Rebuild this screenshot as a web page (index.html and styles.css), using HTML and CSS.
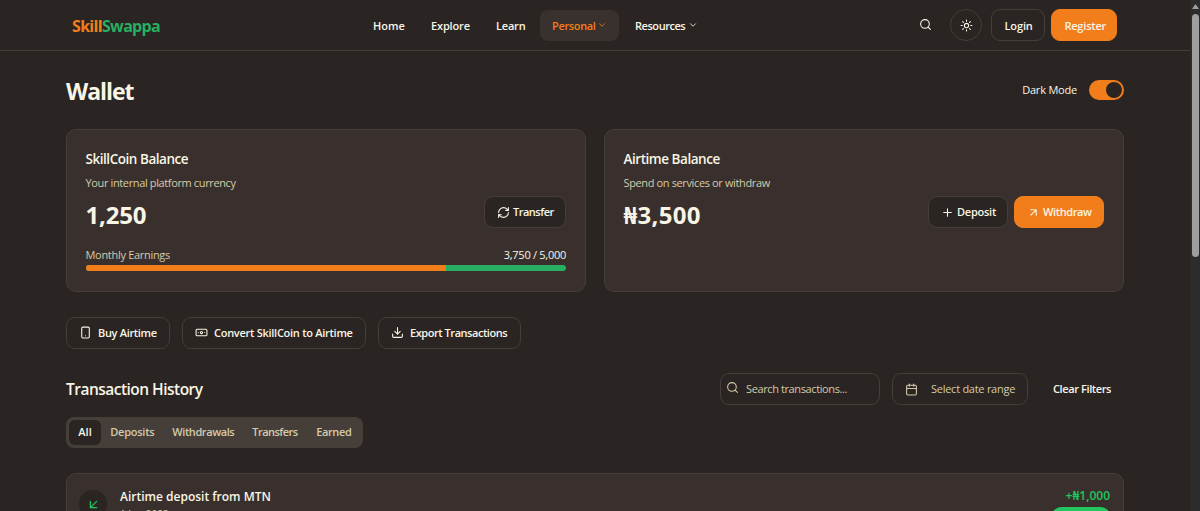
FILE: index.html
```html
<!DOCTYPE html>
<html lang="en">
<head>
<meta charset="utf-8">
<title>SkillSwappa Wallet</title>
<link rel="stylesheet" href="styles.css">
</head>
<body>
<div class="app">
<div class="page">
  <header class="header">
    <div class="logo"><span class="t"><span class="logo-a">Skill</span><span class="logo-b">Swappa</span></span></div>
    <nav class="nav">
      <a class="nav-item home"><span class="t">Home</span></a>
      <a class="nav-item explore"><span class="t">Explore</span></a>
      <a class="nav-item learn"><span class="t">Learn</span></a>
      <a class="nav-item personal active"><span class="t">Personal</span><svg class="chev" viewBox="0 0 24 24"><path d="m6 9 6 6 6-6"/></svg></a>
      <a class="nav-item resources"><span class="t">Resources</span><svg class="chev" viewBox="0 0 24 24"><path d="m6 9 6 6 6-6"/></svg></a>
    </nav>
    <div class="header-actions">
      <svg class="icon search" viewBox="0 0 24 24"><circle cx="11" cy="11" r="8"/><path d="m21 21-4.3-4.3"/></svg>
      <button class="btn theme"><svg class="icon" viewBox="0 0 24 24"><circle cx="12" cy="12" r="4"/><path d="M12 2v2M12 20v2M4.9 4.9l1.4 1.4M17.7 17.7l1.4 1.4M2 12h2M20 12h2M6.3 17.7l-1.4 1.4M19.1 4.9l-1.4 1.4"/></svg></button>
      <button class="btn login"><span class="t">Login</span></button>
      <button class="btn primary register"><span class="t">Register</span></button>
    </div>
  </header>
  <main class="main">
    <div class="title-row">
      <h1 class="title"><span class="t">Wallet</span></h1>
      <div class="mode"><span class="t">Dark Mode</span><span class="switch"><span class="knob"></span></span></div>
    </div>
    <section class="cards">
      <article class="card">
        <h2 class="card-title"><span class="t">SkillCoin Balance</span></h2>
        <p class="sub"><span class="t">Your internal platform currency</span></p>
        <div class="amount-row">
          <div class="amount"><span class="t">1,250</span></div>
          <button class="btn transfer"><svg class="icon" viewBox="0 0 24 24"><path d="M3 12a9 9 0 0 1 9-9 9.75 9.75 0 0 1 6.74 2.74L21 8"/><path d="M21 3v5h-5"/><path d="M21 12a9 9 0 0 1-9 9 9.75 9.75 0 0 1-6.74-2.74L3 16"/><path d="M8 16H3v5"/></svg><span class="t">Transfer</span></button>
        </div>
        <div class="earn"><span class="t earn-label">Monthly Earnings</span><span class="t earn-value">3,750 / 5,000</span></div>
        <div class="bar"><div class="bar-fill" style="width:75%"></div></div>
      </article>
      <article class="card">
        <h2 class="card-title"><span class="t">Airtime Balance</span></h2>
        <p class="sub"><span class="t">Spend on services or withdraw</span></p>
        <div class="amount-row">
          <div class="amount naira"><span class="t">₦3,500</span></div>
          <div class="pair">
            <button class="btn deposit"><svg class="icon" viewBox="0 0 24 24"><path d="M5 12h14M12 5v14"/></svg><span class="t">Deposit</span></button>
            <button class="btn primary withdraw"><svg class="icon" viewBox="0 0 24 24"><path d="M7 7h10v10M7 17 17 7"/></svg><span class="t">Withdraw</span></button>
          </div>
        </div>
      </article>
    </section>
    <section class="quick">
      <button class="btn buy"><svg class="icon" viewBox="0 0 24 24"><rect x="5" y="2" width="14" height="20" rx="2"/><path d="M12 18h.01"/></svg><span class="t">Buy Airtime</span></button>
      <button class="btn convert"><svg class="icon" viewBox="0 0 24 24"><rect x="2" y="6" width="20" height="12" rx="2"/><circle cx="12" cy="12" r="2"/><path d="M6 12h.01M18 12h.01"/></svg><span class="t">Convert SkillCoin to Airtime</span></button>
      <button class="btn export"><svg class="icon" viewBox="0 0 24 24"><path d="M21 15v4a2 2 0 0 1-2 2H5a2 2 0 0 1-2-2v-4M7 10l5 5 5-5M12 15V3"/></svg><span class="t">Export Transactions</span></button>
    </section>
    <section class="history-head">
      <h2 class="history-title"><span class="t">Transaction History</span></h2>
      <div class="filters">
        <div class="field search-field"><svg class="icon" viewBox="0 0 24 24"><circle cx="11" cy="11" r="8"/><path d="m21 21-4.3-4.3"/></svg><span class="t">Search transactions...</span></div>
        <div class="field date-field"><svg class="icon" viewBox="0 0 24 24"><path d="M8 2v4M16 2v4M3 10h18"/><rect x="3" y="4" width="18" height="18" rx="2"/></svg><span class="t">Select date range</span></div>
        <div class="clear"><span class="t">Clear Filters</span></div>
      </div>
    </section>
    <div class="tabs">
      <span class="tab all selected"><span class="t">All</span></span>
      <span class="tab deposits"><span class="t">Deposits</span></span>
      <span class="tab withdrawals"><span class="t">Withdrawals</span></span>
      <span class="tab transfers"><span class="t">Transfers</span></span>
      <span class="tab earned"><span class="t">Earned</span></span>
    </div>
    <section class="tx">
      <span class="tx-icon"><svg class="icon" viewBox="0 0 24 24"><path d="M17 7 7 17M17 17H7V7"/></svg></span>
      <div class="tx-info"><div class="tx-name"><span class="t">Airtime deposit from MTN</span></div><div class="tx-date"><span class="t">1 Jun 2023</span></div></div>
      <div class="tx-side"><div class="tx-amount"><span class="t">+₦1,000</span></div><div class="badge"></div></div>
    </section>
  </main>
</div>
<div class="scroll"><div class="scroll-arrow"></div><div class="thumb"></div></div>
</div>
</body>
</html>
```
FILE: styles.css
```css
* { box-sizing: border-box; }
body { margin: 0; height: 511px; overflow: hidden; background: #2a2422; color: #f8f5e6; font-family: "Open Sans", "Noto Sans", sans-serif; font-size: 11px; line-height: 16px; }
h1, h2, p { margin: 0; }
.app { display: flex; height: 511px; overflow: hidden; }
.page { width: 1190px; flex: none; }
.t { display: inline-block; white-space: nowrap; }
svg { fill: none; stroke: currentColor; stroke-width: 2; stroke-linecap: round; stroke-linejoin: round; flex: none; }
.icon { width: 13px; height: 13px; }

.header { display: flex; align-items: center; height: 51px; padding: 0 72.6px 0 72px; border-bottom: 1px solid #433d39; }
.logo { width: 289px; font-size: 16px; font-weight: 700; line-height: 24px; padding-top: 2px; letter-spacing: -0.68px; }
.logo-a { color: #f27e1b; }
.logo-b { color: #27ae60; }
.nav { display: flex; gap: 3px; font-weight: 600; }
.nav-item { display: flex; align-items: center; height: 31px; padding: 1px 0 0 12px; border-radius: 8px; }
.home { width: 55px; }
.explore { width: 62px; letter-spacing: -0.15px; }
.learn { width: 53px; letter-spacing: -0.2px; }
.personal { width: 79px; letter-spacing: -0.35px; }
.resources { width: 85px; margin-left: 1px; letter-spacing: -0.45px; }
.active { background: #38312e; color: #f27e1b; }
.chev { width: 10px; height: 10px; margin: -1px 12px 0 auto; }
.resources .chev { margin-right: 10px; }
.header-actions { display: flex; align-items: center; margin-left: auto; }
.btn { display: flex; align-items: center; height: 32px; padding: 0 0 0 12px; border: 1px solid #453e3a; border-radius: 9px; background: #2a2422; color: #f8f5e6; font: 600 11px/16px "Open Sans", sans-serif; }
.primary { background: #f27e1b; border-color: #f27e1b; }
.search { margin: 0 18px 1px 0; }
.theme { width: 32px; padding: 0; justify-content: center; border-radius: 50%; margin-right: 9px; }
.login { width: 54px; margin-right: 6px; padding-top: 1px; letter-spacing: -0.1px; }
.register { width: 66px; padding-top: 1px; letter-spacing: -0.2px; }

.main { padding: 0 66px; }
.title-row { display: flex; justify-content: space-between; height: 77.5px; align-items: center; }
.title { font-size: 23px; line-height: 32px; font-weight: 700; padding-top: 2px; letter-spacing: -1.05px; }
.mode { display: flex; align-items: center; gap: 12px; letter-spacing: -0.2px; }
.switch { display: flex; justify-content: flex-end; align-items: center; width: 35px; height: 20px; padding: 2px; border-radius: 10px; background: #f27e1b; }
.knob { width: 16px; height: 16px; border-radius: 50%; background: #2a2422; }

.cards { display: grid; grid-template-columns: 519.5px 519.5px; gap: 18.5px; }
.card { height: 163px; padding: 18.5px 18.5px 0 18.5px; border: 1px solid #453e3a; border-radius: 10px; background: #39302d; }
.card-title { font-size: 13.5px; line-height: 22px; font-weight: 600; letter-spacing: -0.46px; }
.sub { margin-top: 5px; color: #d4cbab; letter-spacing: -0.37px; }
.amount-row { display: flex; justify-content: space-between; height: 32px; margin-top: 5px; align-items: center; }
.amount { font-size: 24px; line-height: 32px; font-weight: 700; padding-top: 5px; letter-spacing: -0.2px; }
.naira { letter-spacing: 0.3px; }
.transfer { width: 82px; gap: 3px; letter-spacing: -0.5px; }
.pair { display: flex; gap: 6px; }
.deposit { width: 80px; gap: 3px; letter-spacing: -0.25px; }
.withdraw { width: 90px; gap: 3px; letter-spacing: -0.38px; }
.earn { display: flex; justify-content: space-between; margin-top: 19px; color: #d4cbab; letter-spacing: -0.3px; }
.earn-value { color: #f8f5e6; letter-spacing: -0.27px; }
.bar { height: 6px; margin-top: 2px; border-radius: 3px; background: #27ae60; overflow: hidden; }
.bar-fill { height: 6px; background: #f27e1b; }

.quick { display: flex; gap: 12px; margin-top: 25px; }
.buy { width: 104px; gap: 6px; letter-spacing: -0.32px; }
.convert { width: 184px; gap: 6px; letter-spacing: -0.27px; }
.export { width: 143px; gap: 6px; letter-spacing: -0.45px; }
.history-head { display: flex; justify-content: space-between; align-items: center; height: 32px; margin-top: 24px; }
.history-title { font-size: 15.5px; line-height: 24px; font-weight: 600; padding-top: 1px; letter-spacing: -0.52px; }
.filters { display: flex; align-items: center; padding-top: 1px; }
.field { display: flex; align-items: center; height: 32px; border: 1px solid #453e3a; border-radius: 9px; color: #d4cbab; }
.search-field { width: 160px; padding-left: 5px; gap: 7px; margin-right: 12px; letter-spacing: -0.39px; }
.search-field .icon { margin-top: -4px; }
.date-field { width: 136px; padding-left: 12px; gap: 13px; letter-spacing: -0.26px; }
.clear { width: 96px; padding-left: 25px; font-weight: 600; letter-spacing: -0.39px; }

.tabs { display: flex; align-items: center; width: 297px; height: 31px; margin-top: 12.5px; padding: 0 3px; border-radius: 8px; background: #463e39; color: #d4cbab; font-weight: 600; }
.tab { height: 25px; padding: 4px 0 0 9.3px; border-radius: 6px; }
.selected { background: #2a2422; color: #f8f5e6; }
.all { width: 32px; }
.deposits { width: 62px; letter-spacing: -0.25px; }
.withdrawals { width: 80px; letter-spacing: -0.42px; }
.transfers { width: 64px; letter-spacing: -0.53px; }
.earned { width: 53px; letter-spacing: -0.4px; }

.tx { display: flex; align-items: flex-start; height: 80px; margin-top: 25px; padding: 13px; border: 1px solid #453e3a; border-radius: 10px; background: #39302d; }
.tx-icon { display: flex; align-items: center; justify-content: center; width: 28px; height: 28px; margin: 3px 13px 0 -1px; border-radius: 50%; background: #2a2422; color: #22c55e; }
.tx-icon .icon { width: 15px; height: 15px; }
.tx-info { flex: 1; }
.tx-name { font-size: 12px; font-weight: 600; line-height: 20px; }
.tx-date { margin-top: -1px; font-size: 10px; color: #d4cbab; }
.tx-side { display: flex; flex-direction: column; align-items: flex-end; }
.tx-amount { color: #22c55e; font-size: 12px; font-weight: 600; line-height: 18px; }
.badge { width: 58px; height: 18px; margin-top: 2px; border-radius: 9px; background: #22c55e; }

.scroll { width: 10px; flex: none; padding: 4px 1px 0 2px; background: #2c2c2c; }
.scroll-arrow { width: 7px; height: 5px; background: #9f9f9f; clip-path: polygon(50% 0, 100% 100%, 0 100%); }
.thumb { width: 7px; height: 243px; margin-top: 5px; border-radius: 4px; background: #9f9f9f; }
```
